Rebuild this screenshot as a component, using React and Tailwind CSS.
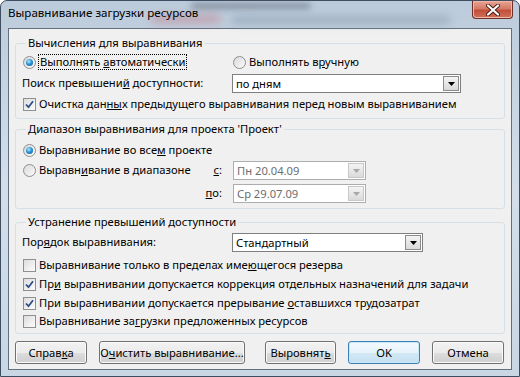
import React from 'react';

const font = "font-['Noto_Sans','Liberation_Sans',sans-serif]";

const Radio = ({ checked }) => (
    <span className="w-[13px] h-[13px] shrink-0 rounded-full border border-[#8e8f8f] bg-linear-to-br from-[#d9d9d9] to-[#fbfbfb] flex items-center justify-center">
        {checked && (
            <span className="w-[7px] h-[7px] rounded-full bg-[radial-gradient(circle_at_40%_35%,#b6ecff_0%,#2a95d6_45%,#0b4f91_100%)]" />
        )}
    </span>
);

const Check = ({ checked }) => (
    <span className="w-[13px] h-[13px] shrink-0 border border-[#8e8f8f] bg-linear-to-br from-[#dcdcdc] to-[#fdfdfd] flex items-center justify-center">
        {checked && (
            <svg width="9" height="9" viewBox="0 0 9 9">
                <path d="M1 4.5 L3.5 7.2 L8 1.2" fill="none" stroke="#2d4d8c" strokeWidth="1.8" />
            </svg>
        )}
    </span>
);

const Arrow = ({ disabled }) => (
    <span className={`w-[16px] h-[15px] m-[1px] shrink-0 border flex items-center justify-center bg-linear-to-b from-[#f4f4f4] to-[#dadada] ${disabled ? 'border-[#c8c8c8]' : 'border-[#8c8c8c]'}`}>
        <svg width="7" height="4" viewBox="0 0 7 4">
            <path d="M0 0 H7 L3.5 4 Z" fill={disabled ? '#a8a8a8' : '#000'} />
        </svg>
    </span>
);

const Combo = ({ value, width, disabled }) => (
    <div className={`${width} h-[19px] shrink-0 border bg-white flex items-center justify-between ${disabled ? 'border-[#adadad] text-[#6d6d6d]' : 'border-[#7f7f7f] text-black'}`}>
        <span className="pl-[3px] leading-none">{value}</span>
        <Arrow disabled={disabled} />
    </div>
);

const Button = ({ children, width, primary }) => (
    <button
        className={`${width} h-[23px] shrink-0 rounded-[3px] border text-[11.2px] leading-none whitespace-nowrap ${font} ${
            primary
                ? 'border-[#3c7fb1] shadow-[inset_0_0_0_1px_#c5e8fb] bg-[linear-gradient(to_bottom,#f4fafe_0%,#e6f3fb_50%,#d4e9f5_50%,#c4dff0_100%)]'
                : 'border-[#707070] shadow-[inset_0_0_0_1px_#fbfbfb] bg-[linear-gradient(to_bottom,#f2f2f2_0%,#ebebeb_50%,#dddddd_50%,#cfcfcf_100%)]'
        }`}
    >
        {children}
    </button>
);

const Group = ({ title, height, className, children }) => (
    <fieldset className={`ml-[6px] w-[490px] ${height} border border-[#d5dfe5] rounded-[3px] pl-[7px] ${className}`}>
        <legend className="ml-[3px] px-[2px] leading-[16px]">{title}</legend>
        {children}
    </fieldset>
);

const App = () => {
    return (
        <div className={`w-[520px] h-[377px] bg-white text-[11.2px] text-black ${font}`}>
            <div className="w-full h-full flex flex-col border border-[#3e4d60] rounded-t-[7px] bg-linear-to-b from-[#bccbdb] via-[#d3dee9] to-[#c9d6e3] overflow-hidden">
                {/* title bar */}
                <div className="relative h-[27px] shrink-0 flex items-start justify-between pl-[7px]">
                    <span className="absolute left-[190px] top-[2px] w-[120px] h-[6px] rounded-full bg-[#5f6a78] opacity-60 blur-[3px]" />
                    <span className="absolute left-[150px] top-[14px] w-[70px] h-[8px] rounded-full bg-[#c5606a] opacity-40 blur-[4px]" />
                    <span className="absolute left-[230px] top-[15px] w-[220px] h-[8px] rounded-full bg-[#7e92a8] opacity-50 blur-[4px]" />
                    <span className="relative mt-[3px] text-[11.6px] leading-[18px] text-black">Выравнивание загрузки ресурсов</span>
                    <div className="relative mr-[6px] w-[41px] h-[18px] rounded-b-[4px] border border-t-0 border-[#6e3028] bg-[linear-gradient(to_bottom,#e8a595_0%,#d47a66_45%,#c14f3a_55%,#cf7058_100%)] shadow-[inset_0_0_0_1px_#f0b7a8] flex items-center justify-center">
                        <svg width="14" height="12" viewBox="0 0 14 12">
                            <path d="M2 1.5 L12 10.5 M12 1.5 L2 10.5" stroke="#4a1a14" strokeWidth="4" strokeLinecap="round" />
                            <path d="M2 1.5 L12 10.5 M12 1.5 L2 10.5" stroke="#ffffff" strokeWidth="2.2" strokeLinecap="round" />
                        </svg>
                    </div>
                </div>

                {/* client area */}
                <div className="mx-[7px] h-[342px] shrink-0 border border-[#61707f] bg-[#f0f0f0] flex flex-col">
                    <Group title="Вычисления для выравнивания" height="h-[84px]" className="mt-[6px]">
                        <div className="mt-[1px] h-[20px] flex items-center">
                            <div className="w-[210px] flex items-center">
                                <Radio checked />
                                <span className="ml-[2px] px-[1px] leading-[14px] border border-dotted border-black">
                                    Выполнять <u>а</u>втоматически
                                </span>
                            </div>
                            <Radio />
                            <span className="ml-[3px]">Выполнять в<u>р</u>учную</span>
                        </div>
                        <div className="mt-[2px] h-[19px] flex items-center">
                            <span className="w-[210px] -ml-[1px]">Поиск превышени<u>й</u> доступности:</span>
                            <Combo value="по дням" width="w-[229px]" />
                        </div>
                        <div className="mt-[1px] h-[20px] flex items-center">
                            <Check checked />
                            <span className="ml-[3px]">Очистка дан<u>ны</u>х предыдущего выравнивания перед новым выравниванием</span>
                        </div>
                    </Group>

                    <Group title="Диапазон выравнивания для проекта 'Проект'" height="h-[88px]" className="mt-[2px]">
                        <div className="mt-[3px] h-[20px] flex items-center">
                            <Radio checked />
                            <span className="ml-[3px]">Выравнивание во все<u>м</u> проекте</span>
                        </div>
                        <div className="mt-[1px] h-[19px] flex items-center">
                            <div className="w-[210px] flex items-center">
                                <Radio />
                                <span className="ml-[3px] flex-1">Выравн<u>и</u>вание в диапазоне</span>
                                <span className="pr-[11px]"><u>с</u>:</span>
                            </div>
                            <Combo value="Пн 20.04.09" width="w-[133px]" disabled />
                        </div>
                        <div className="mt-[4px] h-[19px] flex items-center">
                            <span className="w-[210px] text-right pr-[11px]"><u>п</u>о:</span>
                            <Combo value="Ср 29.07.09" width="w-[133px]" disabled />
                        </div>
                    </Group>

                    <Group title="Устранение превышений доступности" height="h-[120px]" className="mt-[5px]">
                        <div className="mt-[3px] h-[19px] flex items-center">
                            <span className="w-[210px] -ml-[1px]">Пор<u>я</u>док выравнивания:</span>
                            <Combo value="Стандартный" width="w-[191px]" />
                        </div>
                        <div className="mt-[4px] h-[19px] flex items-center">
                            <Check />
                            <span className="ml-[3px]">Выравнивание только в пределах име<u>ю</u>щегося резерва</span>
                        </div>
                        <div className="h-[19px] flex items-center">
                            <Check checked />
                            <span className="ml-[3px]">Пр<u>и</u> выравнивании допускается коррекция отдельных назначений для задачи</span>
                        </div>
                        <div className="h-[18px] flex items-center">
                            <Check checked />
                            <span className="ml-[3px]">При выравнивании допускается прерывание <u>о</u>ставшихся трудозатрат</span>
                        </div>
                        <div className="h-[19px] flex items-center">
                            <Check />
                            <span className="ml-[3px]">Выравнивание за<u>г</u>рузки предложенных ресурсов</span>
                        </div>
                    </Group>

                    <div className="mt-[7px] ml-[6px] flex items-center">
                        <Button width="w-[72px]">Справ<u>к</u>а</Button>
                        <Button width="w-[146px] ml-[12px]">О<u>ч</u>истить выравнивание...</Button>
                        <Button width="w-[71px] ml-[20px]">Выровнят<u>ь</u></Button>
                        <Button width="w-[72px] ml-[12px]" primary>OK</Button>
                        <Button width="w-[72px] ml-[12px]">Отмена</Button>
                    </div>
                </div>
            </div>
        </div>
    );
};

export default App;
